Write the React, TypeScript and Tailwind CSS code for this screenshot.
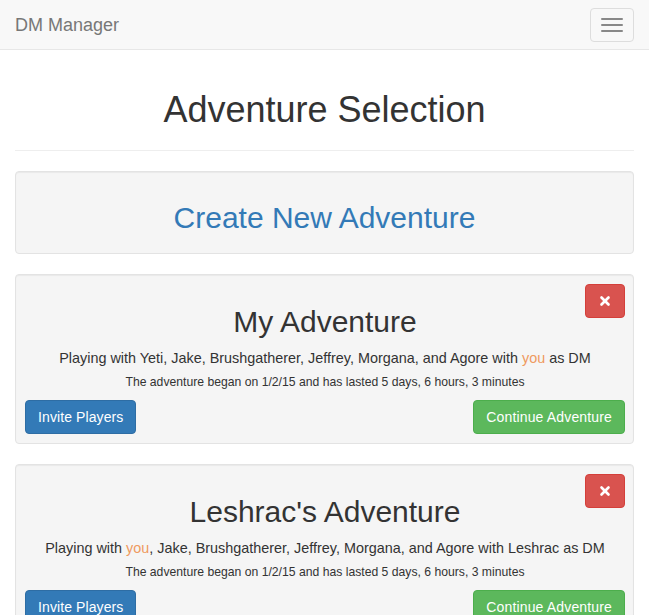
import { X } from 'lucide-react'

type Adventure = {
  name: string
  players: string[]
  dm: string
  began: string
  lasted: string
}

const adventures: Adventure[] = [
  {
    name: 'My Adventure',
    players: ['Yeti', 'Jake', 'Brushgatherer', 'Jeffrey', 'Morgana', 'Agore'],
    dm: 'you',
    began: '1/2/15',
    lasted: '5 days, 6 hours, 3 minutes',
  },
  {
    name: "Leshrac's Adventure",
    players: ['you', 'Jake', 'Brushgatherer', 'Jeffrey', 'Morgana', 'Agore'],
    dm: 'Leshrac',
    began: '1/2/15',
    lasted: '5 days, 6 hours, 3 minutes',
  },
]

function Name({ name }: { name: string }) {
  if (name === 'you') return <span className="text-[#ef9a5f]">you</span>
  return <>{name}</>
}

function PlayerList({ players }: { players: string[] }) {
  return (
    <>
      {players.map((p, i) => (
        <span key={i}>
          {i === players.length - 1 ? 'and ' : ''}
          <Name name={p} />
          {i < players.length - 1 ? ', ' : ''}
        </span>
      ))}
    </>
  )
}

function AdventureCard({ adventure }: { adventure: Adventure }) {
  return (
    <div className="relative mb-[20px] rounded-[4px] border border-[#e3e3e3] bg-[#f5f5f5] pt-[30px] pr-[8px] pb-[9px] pl-[9px] shadow-[inset_0_1px_1px_rgba(0,0,0,0.05)]">
      <button className="absolute top-[9px] right-[8px] flex h-[34px] w-[40px] items-center justify-center rounded-[4px] border border-[#d43f3a] bg-[#d9534f] text-white">
        <X size={14} strokeWidth={4.5} />
      </button>
      <h2 className="mb-[10px] text-center text-[30px] leading-[33px] text-[#333]">{adventure.name}</h2>
      <p className="text-center text-[14.4px] leading-[20px] text-[#333]">
        Playing with <PlayerList players={adventure.players} /> with <Name name={adventure.dm} /> as DM
      </p>
      <div className="mt-[6px] text-center text-[12.2px] leading-[17px] text-[#333]">
        The adventure began on {adventure.began} and has lasted {adventure.lasted}
      </div>
      <div className="mt-[9px] flex justify-between">
        <button className="h-[34px] rounded-[4px] border border-[#2e6da4] bg-[#337ab7] px-[12px] text-[14px] leading-[20px] tracking-[0.1px] text-white">
          Invite Players
        </button>
        <button className="h-[34px] rounded-[4px] border border-[#4cae4c] bg-[#5cb85c] px-[12px] text-[14px] leading-[20px] tracking-[0.15px] text-white">
          Continue Adventure
        </button>
      </div>
    </div>
  )
}

export default function App() {
  return (
    <div className="min-h-screen bg-white font-['Liberation_Sans',Arial,sans-serif] text-[#333]">
      <nav className="flex h-[50px] justify-between border-b border-[#e7e7e7] bg-[#f8f8f8]">
        <a className="px-[15px] py-[15px] text-[18px] leading-[20px] text-[#777]">DM Manager</a>
        <button className="mt-[8px] mr-[15px] flex h-[34px] w-[44px] flex-col items-center justify-center gap-[4px] self-start rounded-[4px] border border-[#ddd]">
          <span className="block h-[2px] w-[22px] rounded-[1px] bg-[#888]" />
          <span className="block h-[2px] w-[22px] rounded-[1px] bg-[#888]" />
          <span className="block h-[2px] w-[22px] rounded-[1px] bg-[#888]" />
        </button>
      </nav>

      <div className="px-[15px]">
        <div className="mb-[20px] border-b border-[#eee] pb-[20px]">
          <h1 className="mt-[40px] text-center text-[36px] leading-[40px] text-[#333]">Adventure Selection</h1>
        </div>

        <div className="mb-[20px] rounded-[4px] border border-[#e3e3e3] bg-[#f5f5f5] pt-[29px] pb-[19px] shadow-[inset_0_1px_1px_rgba(0,0,0,0.05)]">
          <h2 className="text-center text-[30px] leading-[33px] text-[#337ab7]">Create New Adventure</h2>
        </div>

        {adventures.map((a) => (
          <AdventureCard key={a.name} adventure={a} />
        ))}
      </div>
    </div>
  )
}
